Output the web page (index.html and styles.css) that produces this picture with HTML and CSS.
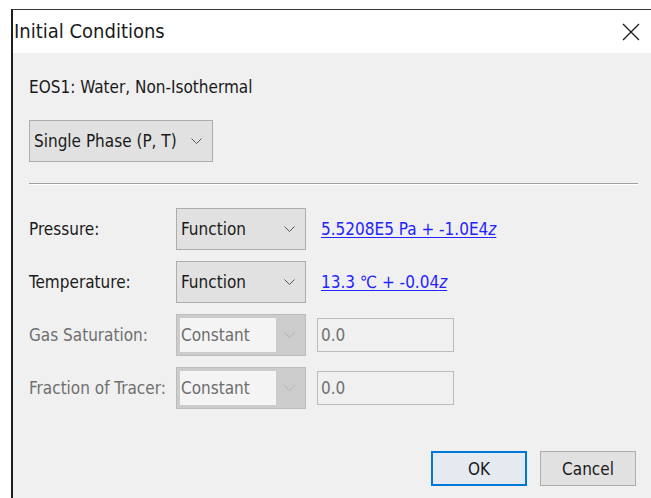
FILE: index.html
```html
<!DOCTYPE html>
<html lang="en">
<head>
<meta charset="utf-8">
<title>Initial Conditions</title>
<link rel="stylesheet" href="styles.css">
</head>
<body>
<div class="window">
  <div class="titlebar">
    <span class="title">Initial Conditions</span>
    <svg class="close" width="18" height="18" viewBox="0 0 18 18" aria-hidden="true">
      <path d="M1 1 L17 17 M17 1 L1 17" stroke="#1a1a1a" stroke-width="1.3" fill="none"/>
    </svg>
  </div>
  <div class="content">
    <div class="eos">EOS1: Water, Non-Isothermal</div>
    <div class="combo phase">
      <span class="combo-text">Single Phase (P, T)</span>
      <svg class="chev" width="11" height="6" viewBox="0 0 11 6"><path d="M0.5 0.5 L5.5 5.5 L10.5 0.5" stroke="#555" fill="none"/></svg>
    </div>
    <div class="sep"></div>
    <div class="rows">
      <div class="label">Pressure:</div>
      <div class="combo">
        <span class="combo-text">Function</span>
        <svg class="chev" width="11" height="6" viewBox="0 0 11 6"><path d="M0.5 0.5 L5.5 5.5 L10.5 0.5" stroke="#555" fill="none"/></svg>
      </div>
      <a class="link" href="#">5.5208E5 Pa + -1.0E4<i>z</i></a>

      <div class="label">Temperature:</div>
      <div class="combo">
        <span class="combo-text">Function</span>
        <svg class="chev" width="11" height="6" viewBox="0 0 11 6"><path d="M0.5 0.5 L5.5 5.5 L10.5 0.5" stroke="#555" fill="none"/></svg>
      </div>
      <a class="link" href="#">13.3 ℃ + -0.04<i>z</i></a>

      <div class="label disabled">Gas Saturation:</div>
      <div class="combo off">
        <span class="combo-text">Constant</span>
        <svg class="chev" width="11" height="6" viewBox="0 0 11 6"><path d="M0.5 0.5 L5.5 5.5 L10.5 0.5" stroke="#b4b4b4" fill="none"/></svg>
      </div>
      <div class="field">0.0</div>

      <div class="label disabled">Fraction of Tracer:</div>
      <div class="combo off">
        <span class="combo-text">Constant</span>
        <svg class="chev" width="11" height="6" viewBox="0 0 11 6"><path d="M0.5 0.5 L5.5 5.5 L10.5 0.5" stroke="#b4b4b4" fill="none"/></svg>
      </div>
      <div class="field">0.0</div>
    </div>
    <div class="buttons">
      <button class="btn default">OK</button>
      <button class="btn">Cancel</button>
    </div>
  </div>
</div>
</body>
</html>
```
FILE: styles.css
```css
html, body {
  margin: 0;
  padding: 0;
  background: #ffffff;
}

body {
  font-family: "Liberation Sans Narrow", "DejaVu Sans Condensed", "Liberation Sans", sans-serif;
  font-size: 17px;
  color: #1a1a1a;
}

.window {
  margin: 9px 0 0 11px;
  height: 489px;
  border-left: 2px solid #1e1e1e;
  border-top: 1px solid #3a3a3a;
  display: flex;
  flex-direction: column;
  background: #f0f0f0;
}

.titlebar {
  height: 43px;
  background: #ffffff;
  display: flex;
  align-items: center;
  justify-content: space-between;
  padding: 0 11px 0 1px;
}

.title {
  font-size: 20px;
  color: #1a1a1a;
  position: relative;
  top: -1px;
}

.close {
  display: block;
}

.content {
  flex: 1;
  padding: 24px 13px 0 16px;
}

.eos {
  line-height: 20px;
  height: 20px;
  white-space: nowrap;
}

.combo {
  box-sizing: border-box;
  height: 42px;
  border: 1px solid #adadad;
  background: #e1e1e1;
  display: flex;
  align-items: center;
  justify-content: space-between;
  padding: 0 10px 0 4px;
}

.combo-text {
  white-space: nowrap;
}

.combo .chev {
  display: block;
  flex: none;
}

.phase {
  width: 184px;
  margin-top: 23px;
}

.sep {
  margin-top: 21px;
  border-top: 1px solid #a0a0a0;
  border-bottom: 1px solid #ffffff;
}

.rows {
  margin-top: 23px;
  display: grid;
  grid-template-columns: 147px 130px auto;
  grid-auto-rows: 42px;
  row-gap: 11px;
  align-items: center;
}

.label {
  white-space: nowrap;
}

.label.disabled {
  color: #6f6f6f;
}

.link {
  justify-self: start;
  margin-left: 15px;
  color: #2323ff;
  text-decoration: underline;
  text-underline-offset: 2px;
  white-space: nowrap;
}

.combo.off {
  height: 42px;
  border-color: #bcbcbc;
  background: #cccccc;
  padding: 3px 10px 3px 3px;
  align-items: stretch;
}

.combo.off .combo-text {
  width: 95px;
  background: #f4f4f4;
  color: #6d6d6d;
  display: flex;
  align-items: center;
  padding-left: 1px;
}

.combo.off .chev {
  align-self: center;
}

.field {
  box-sizing: border-box;
  justify-self: start;
  margin-left: 11px;
  width: 137px;
  height: 34px;
  border: 1px solid #bcbcbc;
  color: #707070;
  display: flex;
  align-items: center;
  padding-left: 3px;
}

.buttons {
  margin-top: 42px;
  display: flex;
  justify-content: flex-end;
  gap: 13px;
  padding-right: 2px;
}

.btn {
  box-sizing: border-box;
  width: 96px;
  height: 35px;
  font-family: inherit;
  font-size: 17px;
  color: #1a1a1a;
  background: #e1e1e1;
  border: 1px solid #adadad;
  padding: 0;
}

.btn.default {
  background: #e5eaf0;
  border: 2px solid #0078d7;
}
```
